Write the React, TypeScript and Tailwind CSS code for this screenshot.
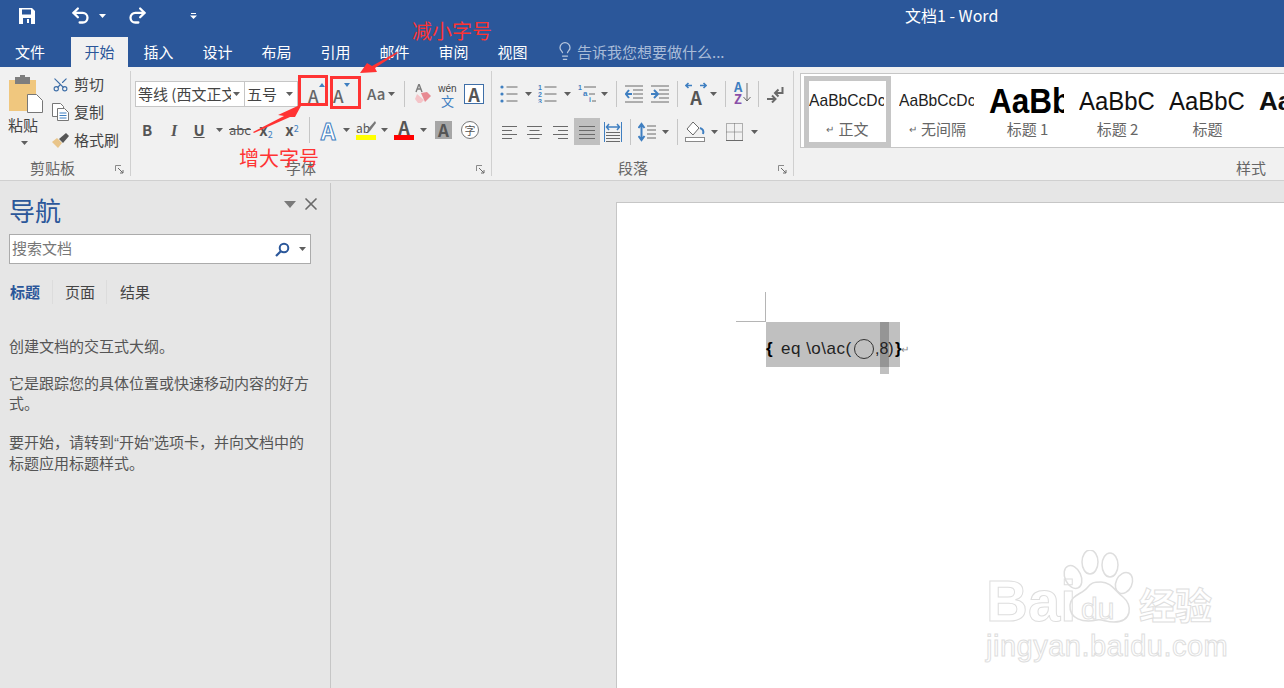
import React from "react";
import { Undo2, Redo2, Lightbulb, Scissors, X } from "lucide-react";

const Caret = ({ c = "#5f5f5f", cls = "" }: { c?: string; cls?: string }) => (
  <svg width="7" height="4" viewBox="0 0 7 4" className={`shrink-0 ${cls}`}>
    <path d="M0 0h7L3.5 4z" fill={c} />
  </svg>
);
const Div = ({ cls }: { cls: string }) => <div className={`w-px h-[26px] bg-[#c6c6c6] shrink-0 ${cls}`} />;
const Launcher = () => (
  <svg width="9" height="9" viewBox="0 0 9 9" className="absolute right-[6px] bottom-[2px]">
    <path d="M.5 6V.5H6" stroke="#8a8a8a" fill="none" />
    <path d="M3 3l5 5M8 5v3H5" stroke="#6a6a6a" fill="none" />
  </svg>
);
const Label = ({ children, cls }: { children: React.ReactNode; cls: string }) => (
  <div className={`absolute bottom-[-2px] h-[20px] leading-[20px] text-[15px] text-[#666] whitespace-nowrap ${cls}`}>{children}</div>
);

const G = "#6a6a6a";
const B = "#3f7fc1";
const Bullets = () => (
  <svg width="18" height="18" viewBox="0 0 18 18" className="shrink-0">
    {[2, 9, 16].map((y) => (
      <g key={y}>
        <circle cx="2" cy={y} r="1.6" fill={B} />
        <path d={`M6.5 ${y}h11`} stroke={G} />
      </g>
    ))}
  </svg>
);
const Numbers = () => (
  <svg width="19" height="18" viewBox="0 0 19 18" className="shrink-0">
    {[2, 9, 16].map((y, i) => (
      <g key={y}>
        <text x="0" y={y + 2.5} fontSize="7" fontWeight="700" fill={B} fontFamily="Liberation Sans">{i + 1}</text>
        <path d={`M6.5 ${y}h12`} stroke={G} />
      </g>
    ))}
  </svg>
);
const Multi = () => (
  <svg width="19" height="18" viewBox="0 0 19 18" className="shrink-0">
    <text x="0" y="5" fontSize="7" fontWeight="700" fill={B} fontFamily="Liberation Sans">1</text>
    <path d="M6 2h12" stroke={G} />
    <text x="5" y="11" fontSize="8" fontWeight="700" fill={B} fontFamily="Liberation Sans">a</text>
    <path d="M11 9h6" stroke={G} />
    <text x="11" y="17" fontSize="7" fontWeight="700" fill={B} fontFamily="Liberation Sans">i</text>
    <path d="M14 16h4" stroke={G} />
  </svg>
);
const Outdent = ({ flip = false }: { flip?: boolean }) => (
  <svg width="18" height="18" viewBox="0 0 18 18" className="shrink-0">
    <path d="M0 1h18M8 5h10M8 9h10M8 13h10M0 17h18" stroke={G} />
    {flip ? <path d="M0 9h6M3 5l4 4-4 4" stroke={B} strokeWidth="2" fill="none" /> : <path d="M7 9H1M4 5L0.8 9 4 13" stroke={B} strokeWidth="2" fill="none" />}
  </svg>
);
const AzSort = () => (
  <div className="relative w-[17px] h-[24px] shrink-0">
    <span className="absolute left-0 top-[-2px] text-[13px] leading-[14px] font-bold text-[#3f7fc1]">A</span>
    <span className="absolute left-0 top-[10px] text-[13px] leading-[14px] font-bold text-[#8a50a8]">Z</span>
    <svg width="8" height="20" viewBox="0 0 8 20" className="absolute right-0 top-[1px]">
      <path d="M4 0v18M.5 14L4 18l3.5-4" stroke={G} fill="none" />
    </svg>
  </div>
);
const Ret = () => (
  <svg width="18" height="17" viewBox="0 0 18 17" className="shrink-0">
    <path d="M15.5 1v6H9M11.5 3.5L8 7l3.500 3.500" stroke={G} strokeWidth="2" fill="none" />
    <path d="M0 13h8M5 9.500L8.500 13 5 16.500" stroke={G} strokeWidth="2" fill="none" />
  </svg>
);
const Align = ({ kind }: { kind: "l" | "c" | "r" | "j" }) => {
  const rows = [2, 6, 10, 14];
  const lens = kind === "j" ? [16, 16, 16, 16] : [15, 10, 15, 10];
  const w = kind === "j" ? 16 : 15;
  return (
    <svg width={w} height="16" viewBox={`0 0 ${w} 16`} className="shrink-0">
      {rows.map((y, i) => {
        const l = lens[i];
        const x = kind === "r" ? w - l : kind === "c" ? (w - l) / 2 : 0;
        return <path key={y} d={`M${x} ${y}.5h${l}`} stroke={G} />;
      })}
    </svg>
  );
};
const Distributed = () => (
  <svg width="18" height="20" viewBox="0 0 18 20" className="shrink-0">
    <path d="M.5 0v20M17.500 0v20" stroke={B} />
    <path d="M3 5h12M5 2L2.500 5 5 8M13 2l2.500 3L13 8" stroke={B} strokeWidth="1.500" fill="none" />
    <path d="M2 10.500h14M2 13.500h14M2 16.500h14M2 19.500h14" stroke={G} />
  </svg>
);
const LineSpacing = () => (
  <svg width="18" height="20" viewBox="0 0 18 20" className="shrink-0">
    <path d="M3.500 2v16M.5 6l3-4 3 4M.5 14l3 4 3-4" stroke={B} strokeWidth="2" fill="none" />
    <path d="M9 4h9M9 8h9M9 12h9M9 16h9" stroke={G} />
  </svg>
);
const Shade = () => (
  <svg width="20" height="21" viewBox="0 0 20 21" className="shrink-0">
    <path d="M8 1L2 8l6 6 6-7z" fill="#fff" stroke={G} />
    <path d="M15 7c3 1 4 3 3 6" stroke={B} strokeWidth="2" fill="none" />
    <rect x=".5" y="16.500" width="19" height="4" fill="#fff" stroke="#8a8a8a" />
  </svg>
);
const Borders = () => (
  <svg width="17" height="18" viewBox="0 0 17 18" className="shrink-0">
    <path d="M.5.500h16v17H.5zM8.500.500v17M.5 9h16" stroke={G} fill="none" strokeDasharray="1 1" />
    <path d="M0 17.500h17" stroke={G} />
  </svg>
);
const AZoom = ({ up }: { up: boolean }) => (
  <div className="relative w-[17px] h-[20px] shrink-0">
    <span className="absolute left-0 bottom-[-1px] text-[17px] leading-[19px] font-medium text-[#666]">A</span>
    <svg width="6" height="4" viewBox="0 0 6 4" className="absolute right-0 top-[-1px]">
      <path d={up ? "M3 0l3 4H0z" : "M0 0h6L3 4z"} fill="#3f7fc1" />
    </svg>
  </div>
);

const Clip = () => (
  <div className="flex flex-col items-start w-[47px] pl-[8px] shrink-0">
    <svg width="36" height="38" viewBox="0 0 36 38" className="mt-[4px]">
      <rect x="1" y="5" width="27" height="31" fill="#f0c77e" />
      <rect x="7" y="2" width="15" height="7" fill="#7e7e7e" />
      <rect x="12" y="0" width="5" height="4" fill="#7e7e7e" />
      <path d="M19.500 19.500h9l6 6v12h-15z" fill="#fff" stroke="#777" />
    </svg>
    <div className="text-[15px] leading-[20px] text-[#444] mt-[2px]">粘贴</div>
    <Caret cls="ml-[13px] mt-[6px]" />
  </div>
);

const ClipItem = ({ icon, text, cls }: { icon: React.ReactNode; text: string; cls: string }) => (
  <div className={`flex items-center h-[20px] ${cls}`}>
    <div className="w-[22px] flex justify-start shrink-0">{icon}</div>
    <span className="text-[15px] leading-[20px] text-[#444] whitespace-nowrap">{text}</span>
  </div>
);

const Clipboard = () => (
  <div className="relative w-[131px] shrink-0 flex border-r border-[#d0d0d0] my-[4px]">
    <Clip />
    <div className="pl-[5px] pt-[3px]">
      <ClipItem cls="mt-0" text="剪切" icon={<Scissors size={17} className="text-[#3f6fa8] -rotate-90" strokeWidth={1.6} />} />
      <ClipItem
        cls="mt-[8px]"
        text="复制"
        icon={
          <svg width="17" height="18" viewBox="0 0 17 18">
            <path d="M.5.500h8l3 3v10H.5z" fill="#fff" stroke="#777" />
            <path d="M5.500 5.500h7l4 4v8h-11z" fill="#fff" stroke="#777" />
            <path d="M7.500 10h7M7.500 12.500h7M7.500 15h7" stroke="#3f7fc1" />
          </svg>
        }
      />
      <ClipItem
        cls="mt-[8px]"
        text="格式刷"
        icon={
          <svg width="17" height="15" viewBox="0 0 17 15">
            <path d="M0 9l5-4 5 5-4 5z" fill="#e9c58a" />
            <path d="M7 6l7-6 3 3-6 7z" fill="#555" />
          </svg>
        }
      />
    </div>
    <Label cls="left-[30px]">剪贴板</Label>
    <Launcher />
  </div>
);

const Combo = ({ text, w, cls }: { text: string; w: string; cls: string }) => (
  <div className={`${w} h-[26px] bg-white border border-[#c6c6c6] flex items-center pl-[2px] pr-[4px] shrink-0 ${cls}`}>
    <span className="flex-1 overflow-hidden whitespace-nowrap text-[15px] text-[#444]">{text}</span>
    <Caret cls="ml-[2px]" />
  </div>
);
const Letter = ({ t, cls }: { t: React.ReactNode; cls: string }) => (
  <span className={`text-center shrink-0 text-[#555] font-bold leading-[20px] ${cls}`}>{t}</span>
);

const FontGroup = () => (
  <div className="relative w-[361px] shrink-0 border-r border-[#d0d0d0] my-[4px] pl-[4px] pt-[10px]">
    <div className="flex items-center h-[26px]">
      <Combo text="等线 (西文正文)" w="w-[110px]" cls="" />
      <Combo text="五号" w="w-[53px]" cls="border-l-0" />
      <div className="ml-[10px]"><AZoom up /></div>
      <div className="ml-[8px]"><AZoom up={false} /></div>
      <span className="ml-[17px] w-[20px] text-[15px] text-[#666] font-medium">Aa</span>
      <Caret cls="ml-[1px]" />
      <Div cls="ml-[9px]" />
      <svg width="17" height="20" viewBox="0 0 17 20" className="ml-[10px] shrink-0">
        <path d="M2 10L9 16l-3 3H3L0 15z" fill="#f4c4c8" />
        <path d="M6 9l6-1 4 4-6 6z" fill="#e88a92" />
        <path d="M1 8L4 0l3 8M2 5h4" stroke="#7b7b7b" strokeWidth="1.400" fill="none" />
      </svg>
      <div className="ml-[7px] w-[17px] h-[24px] flex flex-col items-center shrink-0 pt-[2px]">
        <span className="text-[10px] leading-[10px] text-[#444] font-['Liberation_Sans',sans-serif]">wén</span>
        <span className="text-[13px] leading-[14px] text-[#3f7fc1]">文</span>
      </div>
      <div className="ml-[8px] w-[20px] h-[20px] border border-[#3f6fa8] bg-white flex items-center justify-center text-[18px] font-bold text-[#555] leading-[18px] shrink-0">A</div>
    </div>
    <div className="flex items-center h-[26px] mt-[10px]">
      <Letter t="B" cls="w-[14px] ml-[5px] text-[15px]" />
      <Letter t={<i className="font-['Liberation_Serif',serif]">I</i>} cls="w-[14px] ml-[13px] text-[16px]" />
      <Letter t={<u>U</u>} cls="w-[14px] ml-[11px] text-[15px]" />
      <Caret cls="ml-[10px]" />
      <Letter t={<s className="font-normal">abc</s>} cls="w-[22px] ml-[6px] text-[13px]" />
      <Letter
        t={<>x<sub className="text-[9px] font-normal text-[#3f7fc1]">2</sub></>}
        cls="w-[16px] ml-[7px] text-[15px]"
      />
      <Letter
        t={<>x<sup className="text-[9px] font-normal text-[#3f7fc1]">2</sup></>}
        cls="w-[16px] ml-[10px] text-[15px]"
      />
      <Div cls="ml-[9px]" />
      <span className="ml-[9px] w-[18px] shrink-0 text-center text-[23px] leading-[24px] font-bold text-white [-webkit-text-stroke:1px_#3f7fc1]">A</span>
      <Caret cls="ml-[6px]" />
      <div className="relative ml-[6px] w-[20px] shrink-0 flex flex-col items-center">
        <span className="text-[12px] leading-[15px] text-[#555] self-start">ab</span>
        <svg width="10" height="12" viewBox="0 0 10 12" className="absolute right-0 top-[1px]">
          <path d="M9 0l1 2-6 8-3 1 1-3z" fill="#777" />
        </svg>
        <div className="w-[20px] h-[5px] bg-[#ffff00]" />
      </div>
      <Caret cls="ml-[5px]" />
      <div className="ml-[6px] w-[20px] shrink-0 flex flex-col items-center">
        <span className="text-[18px] leading-[15px] font-bold text-[#555]">A</span>
        <div className="w-[20px] h-[5px] bg-[#ff0000]" />
      </div>
      <Caret cls="ml-[6px]" />
      <div className="ml-[8px] w-[17px] h-[18px] bg-[#a6a6a6] shrink-0 flex items-center justify-center text-[17px] font-bold text-[#555]">A</div>
      <div className="ml-[9px] w-[18px] h-[18px] rounded-full border border-[#777] bg-white flex items-center justify-center text-[11px] text-[#555] shrink-0">字</div>
    </div>
    <Label cls="left-[155px]">字体</Label>
    <Launcher />
  </div>
);

const ParaGroup = () => (
  <div className="relative w-[302px] shrink-0 border-r border-[#d0d0d0] my-[4px] pt-[10px]">
    <div className="flex items-center h-[26px]">
      <div className="ml-[8px]"><Bullets /></div>
      <Caret cls="ml-[7px]" />
      <div className="ml-[6px]"><Numbers /></div>
      <Caret cls="ml-[7px]" />
      <div className="ml-[7px]"><Multi /></div>
      <Caret cls="ml-[4px]" />
      <Div cls="ml-[8px]" />
      <div className="ml-[8px]"><Outdent /></div>
      <div className="ml-[8px]"><Outdent flip /></div>
      <Div cls="ml-[8px]" />
      <div className="relative ml-[7px] w-[22px] h-[24px] shrink-0 flex items-end justify-center text-[18px] leading-[18px] font-bold text-[#555]">
        <span>A</span>
        <svg width="22" height="7" viewBox="0 0 22 7" className="absolute left-0 top-0">
          <path d="M1 3.500h6M3.500 1L1 3.500 3.500 6M21 3.500h-6M18.500 1L21 3.500 18.500 6" stroke={B} strokeWidth="1.600" fill="none" />
        </svg>
      </div>
      <Caret cls="ml-[3px]" />
      <Div cls="ml-[8px]" />
      <div className="ml-[8px]"><AzSort /></div>
      <Div cls="ml-[7px]" />
      <div className="ml-[8px]"><Ret /></div>
    </div>
    <div className="flex items-center h-[27px] mt-[11px]">
      <div className="ml-[10px]"><Align kind="l" /></div>
      <div className="ml-[10px]"><Align kind="c" /></div>
      <div className="ml-[11px]"><Align kind="r" /></div>
      <div className="ml-[6px] w-[26px] h-[27px] bg-[#c0c0c0] flex items-center justify-center shrink-0"><Align kind="j" /></div>
      <div className="ml-[4px]"><Distributed /></div>
      <Div cls="ml-[8px]" />
      <div className="ml-[7px]"><LineSpacing /></div>
      <Caret cls="ml-[6px]" />
      <Div cls="ml-[8px]" />
      <div className="ml-[7px]"><Shade /></div>
      <Caret cls="ml-[6px]" />
      <div className="ml-[8px]"><Borders /></div>
      <Caret cls="ml-[8px]" />
    </div>
    <Label cls="left-[126px]">段落</Label>
    <Launcher />
  </div>
);

const NARROW = "font-['Liberation_Sans',sans-serif] origin-left";

const Style = ({ sample, name, cls, sel, ret }: { sample: string; name: string; cls: string; sel?: boolean; ret?: boolean }) => (
  <div className={`w-[87px] mr-[3px] h-[71px] shrink-0 flex flex-col items-center ${sel ? "border-[5px] border-[#c6c6c6]" : "border-[5px] border-transparent"}`}>
    <div className="w-[75px] self-start h-[38px] pt-[2px] overflow-hidden flex items-center justify-start">
      <span className={`whitespace-nowrap ${NARROW} ${cls}`}>{sample}</span>
    </div>
    <div className="text-[15px] leading-[20px] text-[#666] whitespace-nowrap flex items-center">
      {ret && <span className="text-[10px] mr-[4px]">↵</span>}
      {name}
    </div>
  </div>
);

const Styles = () => (
  <div className="relative flex-1 min-w-0 my-[4px] pl-[6px] pt-[2px]">
    <div className="flex h-[75px] border border-[#c6c6c6] border-r-0 bg-white pl-[3px] pt-[2px] overflow-hidden">
      <Style sel ret sample="AaBbCcDc" name="正文" cls="text-[17px] text-[#222] scale-x-[0.92]" />
      <Style ret sample="AaBbCcDc" name="无间隔" cls="text-[17px] text-[#222] scale-x-[0.92]" />
      <Style sample="AaBb" name="标题 1" cls="text-[35px] font-bold text-black scale-x-[0.9]" />
      <Style sample="AaBbC" name="标题 2" cls="text-[26px] text-[#111] scale-x-[0.92]" />
      <Style sample="AaBbC" name="标题" cls="text-[26px] text-[#111] scale-x-[0.92]" />
      <Style sample="Aa" name="副" cls="text-[26px] font-bold text-[#111]" />
    </div>
    <div className="absolute bottom-[-2px] right-[18px] h-[20px] leading-[20px] text-[15px] text-[#666]">样式</div>
  </div>
);

const Tab = ({ t, w }: { t: string; w: string }) => (
  <div className={`${w} h-[29px] leading-[29px] text-center text-[15px] text-white shrink-0`}>{t}</div>
);

const Q = ({ c }: { c: string }) => <span className="font-['Liberation_Sans',sans-serif]">{c}</span>;

const Nav = () => (
  <div className="relative w-[331px] shrink-0 border-r border-[#c6c6c6] text-[#444] mt-[2px]">
    <div className="flex items-center justify-between h-[34px] mt-[10px] pl-[9px] pr-[9px]">
      <span className="text-[26px] leading-[34px] text-[#2b579a]">导航</span>
      <div className="flex items-center gap-[5px] mb-[12px]">
        <svg width="12" height="7" viewBox="0 0 12 7"><path d="M0 0h12L6 7z" fill="#7a7a7a" /></svg>
        <X size={20} className="text-[#6a6a6a]" strokeWidth={2} />
      </div>
    </div>
    <div className="mt-[7px] ml-[9px] w-[302px] h-[30px] bg-white border border-[#ababab] flex items-center pl-[2px] pr-[4px]">
      <span className="flex-1 text-[15px] leading-[20px] text-[#777] mb-[2px]">搜索文档</span>
      <svg width="15" height="15" viewBox="0 0 15 15" className="mr-[9px]">
        <circle cx="9" cy="6" r="4.300" fill="none" stroke="#2b579a" strokeWidth="2" />
        <path d="M6 9l-5 5" stroke="#2b579a" strokeWidth="2.200" />
      </svg>
      <Caret />
    </div>
    <div className="flex items-center h-[26px] mt-[15px] pl-[10px] text-[15px]">
      <span className="font-bold text-[#2b579a] w-[30px] whitespace-nowrap">标题</span>
      <div className="w-px h-[24px] bg-[#dcdcdc] ml-[12px]" />
      <span className="ml-[12px] w-[30px] whitespace-nowrap">页面</span>
      <div className="w-px h-[24px] bg-[#dcdcdc] ml-[11px]" />
      <span className="ml-[13px] w-[30px] whitespace-nowrap">结果</span>
    </div>
    <div className="pl-[9px] pr-[20px] mt-[31px] text-[15px] leading-[20px] text-[#555]">
      <p>创建文档的交互式大纲。</p>
      <p className="mt-[17px]">它是跟踪您的具体位置或快速移动内容的好方式。</p>
      <p className="mt-[19px]">要开始，请转到<Q c="“" />开始<Q c="”" />选项卡，并向文档中的标题应用标题样式。</p>
    </div>
  </div>
);

const Watermark = () => (
  <div className="absolute left-[986px] top-[545px] w-[232px] h-[120px] text-transparent pointer-events-none select-none">
    <svg width="160" height="90" viewBox="0 0 160 90" className="absolute left-[60px] top-[5px]">
      <g fill="#fff" stroke="#dedede" strokeWidth="1.500">
        <ellipse cx="27" cy="27" rx="8" ry="12" transform="rotate(-25 27 27)" />
        <ellipse cx="44" cy="12" rx="8" ry="12" />
        <ellipse cx="64" cy="15" rx="8" ry="12" />
        <ellipse cx="78" cy="33" rx="8" ry="11" transform="rotate(25 78 33)" />
        <path d="M55 32c10 0 14 9 22 15 10 8 9 25-9 25-8 0-12-3-17-2-14 3-28-1-27-15 1-10 12-11 17-17 4-5 6-6 14-6z" />
      </g>
    </svg>
    <span className="absolute left-0 top-[27px] text-[58px] leading-[58px] font-bold font-['Liberation_Sans',sans-serif] [-webkit-text-stroke:1px_#dedede]">Bai</span>
    <span className="absolute left-[95px] top-[47px] text-[30px] leading-[34px] font-['Liberation_Sans',sans-serif] [-webkit-text-stroke:1px_#dedede]">du</span>
    <span className="absolute left-[153px] top-[37px] text-[37px] leading-[44px] font-bold tracking-[-1px] [-webkit-text-stroke:1px_#dedede]">经验</span>
    <span className="absolute left-0 top-[84px] text-[29px] leading-[34px] tracking-[0.5px] font-['Liberation_Sans',sans-serif] [-webkit-text-stroke:1px_#dedede]">jingyan.baidu.com</span>
  </div>
);

const Page = () => (
  <div className="ml-[285px] mt-[21px] flex-1 h-[600px] bg-white border-l border-t border-[#c6c6c6] pl-[149px] pt-[119px]">
    <div className="relative flex items-center w-[134px] h-[45px] pt-[8px] bg-[#c0c0c0] text-[17px] leading-[20px] text-[#222] font-['Liberation_Sans',sans-serif] whitespace-nowrap">
      <span className="absolute left-[-30px] top-[-1px] w-[30px] h-px bg-[#b5b5b5]" />
      <span className="absolute left-[-1px] top-[-30px] w-px h-[29px] bg-[#b5b5b5]" />
      <span className="absolute left-[114px] top-0 w-[9px] h-[45px] bg-[#959595]" />
      <span className="absolute left-[114px] top-[45px] w-[9px] h-[7px] bg-[#c0c0c0]" />
      <span className="relative font-bold text-black shrink-0 w-[7px]">{"{"}</span>
      <span className="relative ml-[8px] shrink-0 w-[71px] tracking-[0.5px]">eq \o\ac(</span>
      <span className="relative shrink-0 w-[20px] h-[20px] rounded-full border border-[#333] ml-[2px]" />
      <span className="relative shrink-0 w-[20px] ml-[1px] text-[16px]">,8)</span>
      <span className="relative shrink-0 font-bold text-black w-[4px]">{"}"}</span>
      <span className="absolute left-[135px] top-[18px] text-[10px] text-[#888]">↵</span>
    </div>
  </div>
);

const Annotations = () => (
  <>
    <div className="absolute left-[298px] top-[75px] w-[30px] h-[31px] border-[3px] border-[#f33]" />
    <div className="absolute left-[330px] top-[76px] w-[31px] h-[33px] border-[3px] border-[#f33]" />
    <svg width="170" height="90" viewBox="0 0 170 90" className="absolute left-[245px] top-[50px]">
      <path d="M8 82L39 66 33 65 57 54 50 67 45 67 9 83z" fill="#f33" />
      <path d="M115 23L122 13 127 16 152 2 153 3 130 18 132 22z" fill="#f33" />
    </svg>
    <div className="absolute left-[412px] top-[18px] text-[20px] leading-[26px] text-[#f33] whitespace-nowrap">减小字号</div>
    <div className="absolute left-[239px] top-[145px] text-[20px] leading-[26px] text-[#f33] whitespace-nowrap">增大字号</div>
  </>
);

export default function App() {
  return (
    <div className="relative w-[1284px] h-[688px] overflow-hidden bg-[#e6e6e6] font-['Noto_Sans_CJK_SC','Liberation_Sans',sans-serif]">
      <div className="h-[67px] bg-[#2b579a] flex flex-col">
        <div className="h-[37px] flex items-center text-white relative">
          <svg width="16" height="16" viewBox="0 0 16 16" className="ml-[19px] shrink-0 mb-[6px]">
            <path d="M0 0h13l3 3v13H0z" fill="#fff" />
            <rect x="3" y="1.500" width="9" height="5" fill="#2b579a" />
            <rect x="4" y="10" width="8" height="6" fill="#2b579a" />
            <rect x="8" y="11" width="2" height="4" fill="#fff" />
          </svg>
          <Undo2 size={21} strokeWidth={2.6} className="ml-[35px] shrink-0 mb-[6px]" />
          <Caret c="#fff" cls="ml-[8px] mb-[6px]" />
          <Redo2 size={21} strokeWidth={2.6} className="ml-[21px] shrink-0 mb-[6px]" />
          <svg width="7" height="6" viewBox="0 0 7 6" className="ml-[42px] shrink-0 mb-[6px]">
            <path d="M1 0h5v1H1zM0 2.500h7L3.500 6z" fill="#fff" />
          </svg>
          <span className="ml-[708px] text-[16px] leading-[20px] whitespace-nowrap mb-[8px]">文档1 - Word</span>
        </div>
        <div className="h-[30px] flex items-start">
          <Tab t="文件" w="w-[60px]" />
          <div className="ml-[11px] mr-[1px] w-[57px] h-[30px] leading-[29px] bg-[#f1f1f1] text-center text-[15px] text-[#2b579a] shrink-0">开始</div>
          <Tab t="插入" w="w-[59px]" />
          <Tab t="设计" w="w-[59px]" />
          <Tab t="布局" w="w-[59px]" />
          <Tab t="引用" w="w-[59px]" />
          <Tab t="邮件" w="w-[59px]" />
          <Tab t="审阅" w="w-[59px]" />
          <Tab t="视图" w="w-[59px]" />
          <Lightbulb size={20} className="ml-[13px] mt-[4px] text-[#b8c7de] shrink-0" strokeWidth={1.5} />
          <span className="ml-[2px] text-[15px] leading-[29px] text-[#a9bcd8] whitespace-nowrap">告诉我您想要做什么...</span>
        </div>
      </div>
      <div className="flex h-[114px] bg-[#f1f1f1] border-b border-[#d0d0d0]">
        <Clipboard />
        <FontGroup />
        <ParaGroup />
        <Styles />
      </div>
      <div className="flex h-[507px]">
        <Nav />
        <Page />
      </div>
      <Watermark />
      <Annotations />
    </div>
  );
}
